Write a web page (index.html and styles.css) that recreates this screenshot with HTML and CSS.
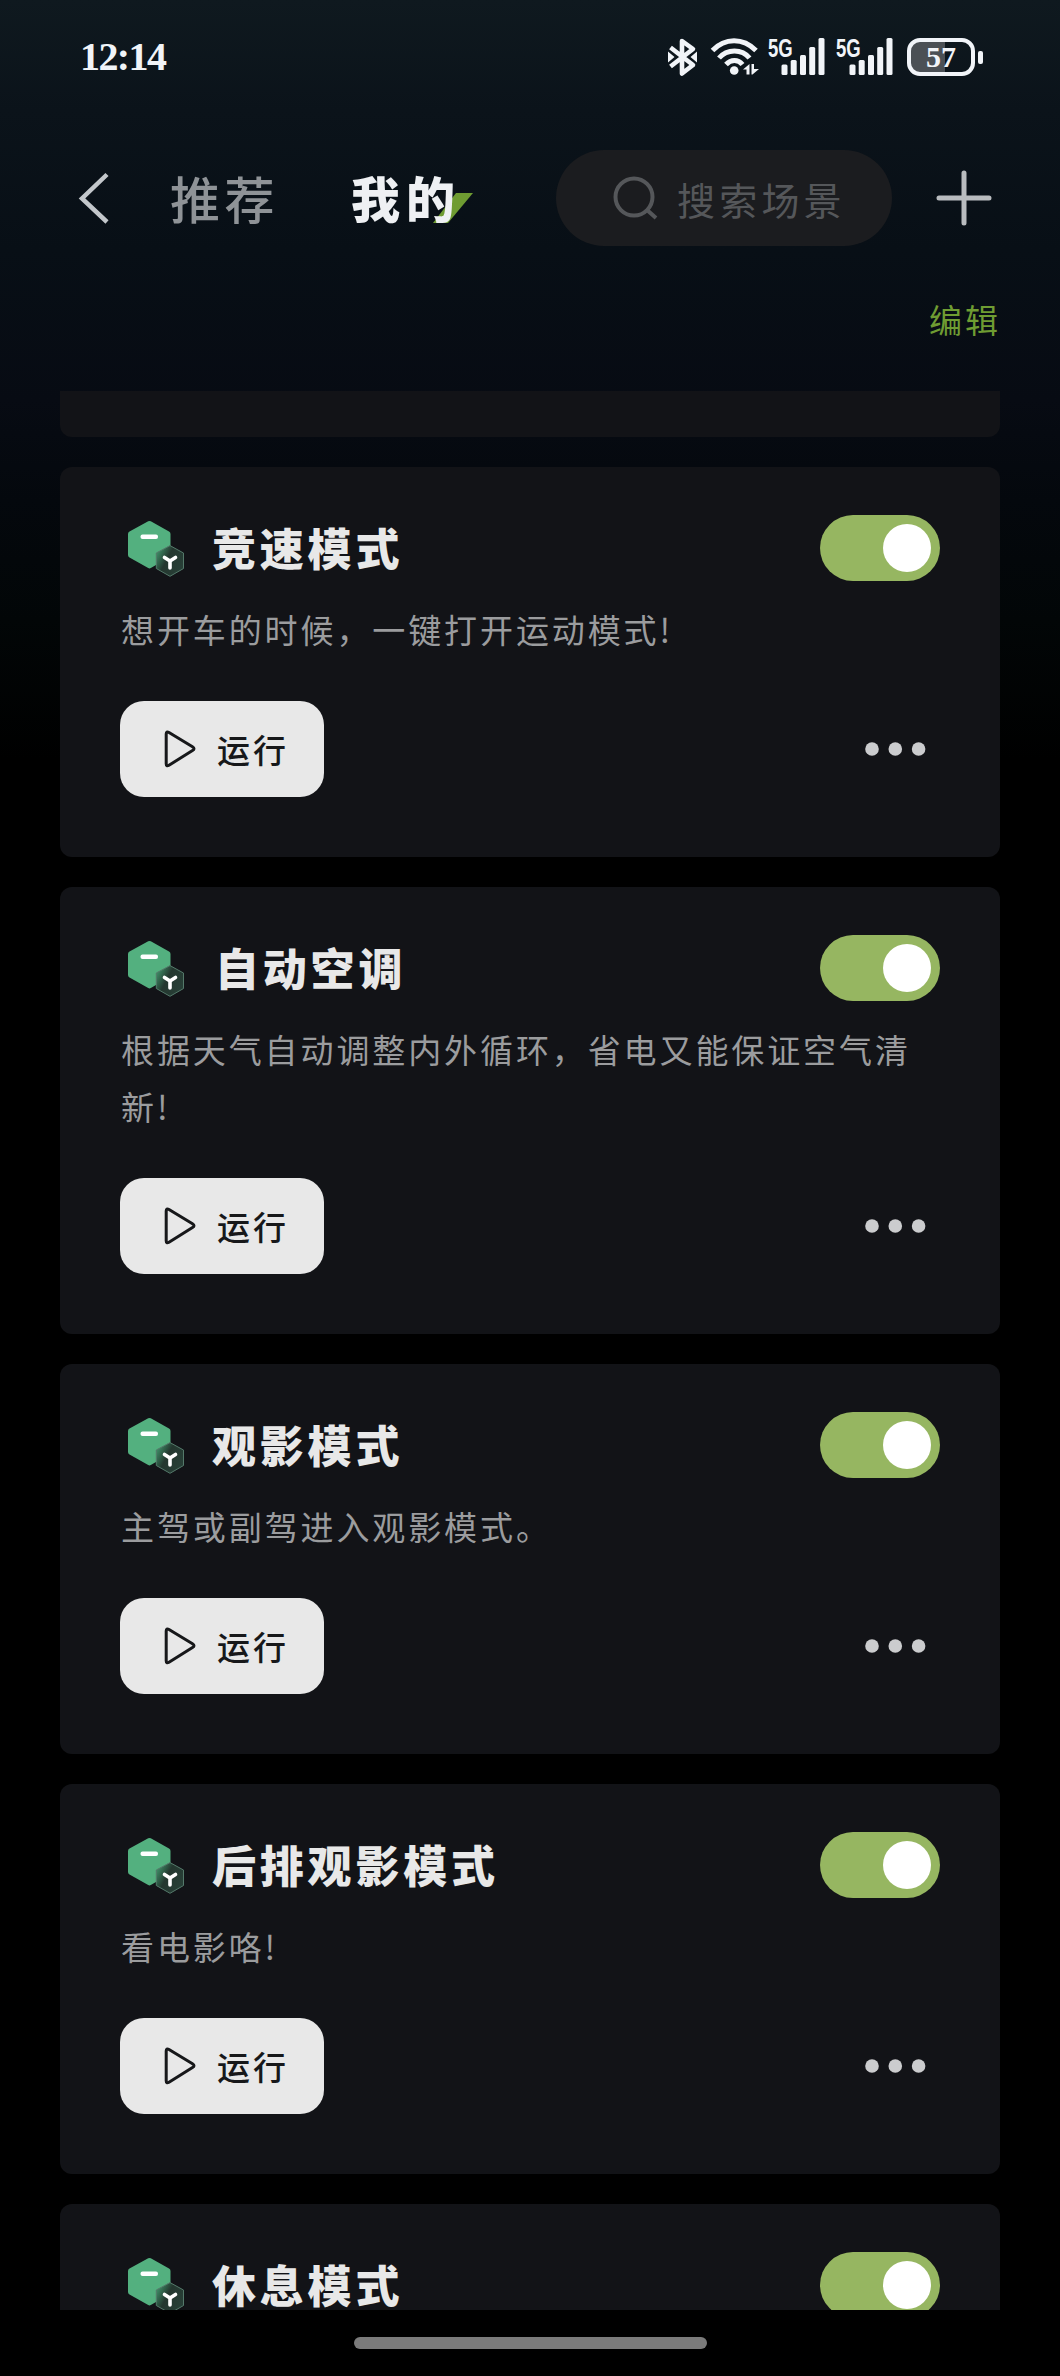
FILE: index.html
```html
<!DOCTYPE html>
<html lang="zh-CN">
<head>
<meta charset="utf-8">
<title>我的场景</title>
<link rel="stylesheet" href="styles.css">
</head>
<body>
<svg class="defs" width="0" height="0" aria-hidden="true">
  <defs>
    <linearGradient id="glass" x1="0" y1="0.2" x2="1" y2="0.8">
      <stop offset="0" stop-color="#3f9169"/>
      <stop offset="0.4" stop-color="#24372f"/>
      <stop offset="1" stop-color="#284038"/>
    </linearGradient>
    <symbol id="scene" viewBox="0 0 66 60">
      <path d="M28.2 3.3 Q29.5 2.6 30.8 3.3 L49 13.4 Q50.5 14.3 50.5 16 V37 Q50.5 38.600 49 39.500 L30.800 50.100 Q29.500 50.900 28.200 50.100 L9.500 39.500 Q8 38.600 8 37 V16 Q8 14.300 9.500 13.400 Z" fill="#53b07f"/>
      <rect x="20.500" y="16.500" width="17.500" height="4.500" rx="2" fill="#fff"/>
      <path d="M50 27.600 L63.500 35 V50.500 L50 58.300 L36.300 50.500 V35 Z" fill="url(#glass)" stroke="#54796a" stroke-width="1" stroke-linejoin="round"/>
      <path d="M44.500 39.500 L50 43 L55.500 39.500 M50 43 V50" fill="none" stroke="#fff" stroke-width="3.600" stroke-linecap="round" stroke-linejoin="round"/>
    </symbol>
    <symbol id="play" viewBox="0 0 32 38">
      <path d="M2.200 4 Q2.200 0.800 5 2.500 L28.500 16.800 Q31.500 18.700 28.500 20.600 L5 35.200 Q2.200 36.900 2.200 33.700 Z" fill="none" stroke="#17181a" stroke-width="3" stroke-linejoin="round"/>
    </symbol>
    <symbol id="dots" viewBox="0 0 62 16">
      <circle cx="8" cy="8" r="6.800"/><circle cx="31.300" cy="8" r="6.800"/><circle cx="54.600" cy="8" r="6.800"/>
    </symbol>
  </defs>
</svg>

<div class="status">
  <span class="clock">12:14</span>
  <div class="status-icons">
    <svg class="bluetooth" viewBox="0 0 30 38" fill="none" stroke="#f1f4f8" stroke-width="4.600" stroke-linejoin="round" stroke-linecap="butt">
      <path d="M2.500 9.500 L25 27 L14 35.500 V3 L25 11 L2.500 28.500"/>
      <path d="M0 13.500 L6.500 19 L0 24.500 Z M29 13.500 L22.500 19 L29 24.500 Z" fill="#f1f4f8" stroke="none"/>
    </svg>
    <svg class="wifi" viewBox="0 0 48 38" fill="none" stroke="#f1f4f8" stroke-width="5" stroke-linecap="butt">
      <path d="M1.500 12.500 C14 -0.500 32 -0.500 45 12.500"/>
      <path d="M8 20 C16 10.500 31 10.500 38.500 20"/>
      <path d="M15 26.500 C20 21 27 21 31.500 26.500"/>
      <circle cx="23.200" cy="32.500" r="4.300" fill="#f1f4f8" stroke="none"/>
      <path d="M32 31.500 L38.500 26 V36.500 H35.500 V31.500 Z M40.500 26 H43 V31 H48 L41.500 36.500 H40.500 Z" fill="#f1f4f8" stroke="none"/>
    </svg>
    <div class="signal">
      <span class="net">5G</span>
      <svg class="bars" viewBox="0 0 44 38" fill="#f1f4f8"><rect x="0.500" y="26.500" width="6" height="10.500" rx="1.500"/><rect x="9.700" y="22" width="6" height="15" rx="1.500"/><rect x="19" y="17" width="6" height="20" rx="1.500"/><rect x="28.200" y="9" width="6" height="28" rx="1.500"/><rect x="37.500" y="0" width="6" height="37" rx="1.500"/></svg>
    </div>
    <div class="signal">
      <span class="net">5G</span>
      <svg class="bars" viewBox="0 0 44 38" fill="#f1f4f8"><rect x="0.500" y="26.500" width="6" height="10.500" rx="1.500"/><rect x="9.700" y="22" width="6" height="15" rx="1.500"/><rect x="19" y="17" width="6" height="20" rx="1.500"/><rect x="28.200" y="9" width="6" height="28" rx="1.500"/><rect x="37.500" y="0" width="6" height="37" rx="1.500"/></svg>
    </div>
    <div class="battery"><span>57</span></div>
    <i class="battery-tip"></i>
  </div>
</div>

<header class="header">
  <svg class="back" viewBox="0 0 32 50" fill="none" stroke="#c3c7cb" stroke-width="4.500"><path d="M30 1.500 L5 25.500 L30 49"/></svg>
  <span class="tab">推荐</span>
  <span class="tab tab-active">我的<svg class="mark" viewBox="0 0 40 30"><path d="M23 0 H40 L15 30 H0 Z" fill="#6f9c32"/></svg></span>
  <div class="search">
    <svg viewBox="0 0 44 44" fill="none" stroke="#55575a" stroke-width="4"><circle cx="21" cy="21" r="18.500"/><path d="M33.500 33.500 L43 42"/></svg>
    <span>搜索场景</span>
  </div>
  <svg class="plus" viewBox="0 0 54 54" stroke="#b9bcbf" stroke-width="5" stroke-linecap="round"><path d="M2 27 H52 M27 2 V52"/></svg>
</header>

<div class="edit-row"><span class="edit">编辑</span></div>

<main class="list">
  <section class="card card-cut"></section>

  <section class="card">
    <div class="card-head"><svg class="scene"><use href="#scene"/></svg><h2>竞速模式</h2><span class="toggle"><i></i></span></div>
    <p>想开车的时候，一键打开运动模式!</p>
    <div class="card-foot"><button class="run"><svg><use href="#play"/></svg>运行</button><svg class="dots"><use href="#dots"/></svg></div>
  </section>

  <section class="card">
    <div class="card-head"><svg class="scene"><use href="#scene"/></svg><h2 class="inset">自动空调</h2><span class="toggle"><i></i></span></div>
    <p>根据天气自动调整内外循环，省电又能保证空气清新!</p>
    <div class="card-foot"><button class="run"><svg><use href="#play"/></svg>运行</button><svg class="dots"><use href="#dots"/></svg></div>
  </section>

  <section class="card">
    <div class="card-head"><svg class="scene"><use href="#scene"/></svg><h2>观影模式</h2><span class="toggle"><i></i></span></div>
    <p>主驾或副驾进入观影模式。</p>
    <div class="card-foot"><button class="run"><svg><use href="#play"/></svg>运行</button><svg class="dots"><use href="#dots"/></svg></div>
  </section>

  <section class="card">
    <div class="card-head"><svg class="scene"><use href="#scene"/></svg><h2>后排观影模式</h2><span class="toggle"><i></i></span></div>
    <p>看电影咯!</p>
    <div class="card-foot"><button class="run"><svg><use href="#play"/></svg>运行</button><svg class="dots"><use href="#dots"/></svg></div>
  </section>

  <section class="card">
    <div class="card-head"><svg class="scene"><use href="#scene"/></svg><h2>休息模式</h2><span class="toggle"><i></i></span></div>
  </section>
</main>

<div class="home"><i></i></div>
</body>
</html>
```
FILE: styles.css
```css
* { box-sizing: border-box; margin: 0; padding: 0; }
svg { display: block; flex: none; overflow: visible; }
.defs { position: absolute; }

body {
  width: 1060px;
  height: 2376px;
  overflow: hidden;
  display: flex;
  flex-direction: column;
  background: #000 linear-gradient(180deg, #0f191f 0, #0b131a 110px, #080f16 250px, #070b13 400px, #04080d 500px, #020607 620px, #000 760px) no-repeat;
  font-family: "Noto Sans CJK SC", sans-serif;
  color: #e8e8e8;
}

/* status bar */
.status {
  height: 114px;
  padding: 0 77px 0 80px;
  display: flex;
  align-items: center;
  justify-content: space-between;
}
.clock {
  font: bold 40px/44px "Liberation Serif", serif;
  letter-spacing: -1.600px;
  color: #f1f4f8;
}
.status-icons { display: flex; align-items: center; height: 38px; }
.bluetooth { width: 30px; height: 38px; margin-right: 13px; }
.wifi { width: 48px; height: 38px; margin-right: 9px; }
.signal { display: flex; width: 57px; height: 38px; margin-right: 11px; }
.net {
  width: 13px;
  white-space: nowrap;
  font: bold 25px/20px "Liberation Sans", sans-serif;
  transform: scaleX(.74);
  transform-origin: 0 0;
  color: #f1f4f8;
}
.bars { width: 44px; height: 38px; }
.battery {
  width: 68px;
  height: 38px;
  margin-left: 3px;
  border: 4px solid #f1f4f8;
  border-radius: 13px;
  background: linear-gradient(90deg, #4b5055 57%, transparent 57%);
  display: flex;
  align-items: center;
  justify-content: center;
  font: bold 30px/30px "Liberation Serif", serif;
  color: #f1f4f8;
}
.battery-tip { width: 5px; height: 13px; margin-left: 3px; border-radius: 2px; background: #f1f4f8; }

/* header */
.header { height: 168px; display: flex; align-items: center; padding: 0 68px 0 77px; }
.back { width: 32px; height: 50px; margin-right: 60px; }
.tab {
  position: relative;
  top: -1px;
  width: 181px;
  padding-left: 1px;
  font-size: 50px;
  line-height: 72px;
  letter-spacing: 4.500px;
  font-weight: 500;
  color: #8f9397;
  white-space: nowrap;
}
.tab-active {
  z-index: 0;
  width: 206px;
  font-size: 49px;
  font-weight: 900;
  letter-spacing: 6px;
  color: #eef0f3;
}
.mark { position: absolute; z-index: -1; left: 83px; top: 32px; width: 40px; height: 30px; }
.search {
  width: 336px;
  height: 96px;
  margin-right: 45px;
  padding-left: 57px;
  border-radius: 48px;
  background: #1b1c1f;
  display: flex;
  align-items: center;
  font-size: 38px;
  letter-spacing: 4.200px;
  color: #55575a;
}
.search svg { width: 44px; height: 44px; margin-right: 20px; }
.plus { width: 54px; height: 54px; }

.edit-row { height: 109px; padding: 13px 59px 0 0; display: flex; justify-content: flex-end; }
.edit { font-size: 33px; line-height: 48px; letter-spacing: 3px; color: #6f9c32; }

/* scene cards */
.list {
  height: 1919px;
  padding: 0 60px;
  overflow: hidden;
  display: flex;
  flex-direction: column;
  gap: 30px;
}
.card { flex: none; padding: 48px 60px 60px; border-radius: 12px; background: #121317; }
.card-cut { height: 46px; padding: 0; border-radius: 0 0 12px 12px; }
.card-head { height: 66px; display: flex; align-items: center; }
.scene { width: 66px; height: 60px; margin-right: 26px; }
.card h2 { flex: 1; padding-bottom: 2px; font-size: 44px; line-height: 64px; letter-spacing: 3.800px; font-weight: 900; color: #e8e8e8; }
.card h2.inset { padding-left: 3px; }
.toggle { width: 120px; height: 66px; padding: 9px; border-radius: 33px; background: #96b661; display: flex; justify-content: flex-end; }
.toggle i { width: 48px; height: 48px; border-radius: 50%; background: #fff; }
.card p { margin: 20px 0 43px; padding-left: 1px; font-size: 33px; line-height: 57px; letter-spacing: 2.900px; color: #9b9c9e; }
.card-foot { display: flex; justify-content: space-between; align-items: center; padding-right: 14px; }
.run {
  width: 204px;
  height: 96px;
  padding-left: 44px;
  border: 0;
  border-radius: 24px;
  background: #e8e8e8;
  display: flex;
  align-items: center;
  font: 500 33px/48px "Noto Sans CJK SC", sans-serif;
  letter-spacing: 3px;
  color: #17181a;
}
.run svg { width: 32px; height: 38px; margin-right: 21px; }
.dots { width: 62px; height: 16px; fill: #cbccce; }

/* home indicator */
.home { height: 66px; padding-top: 27px; display: flex; justify-content: center; }
.home i { width: 353px; height: 12px; border-radius: 6px; background: #7b7b7b; }
```
